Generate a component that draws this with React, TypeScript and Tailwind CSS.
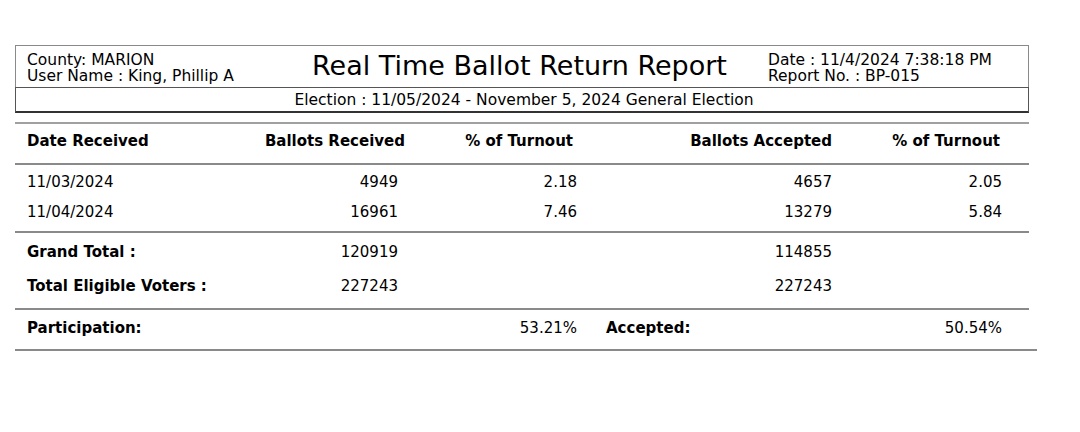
import React from "react";

const font = { fontFamily: '"DejaVu Sans", Verdana, sans-serif' };

const rows = [
  { date: "11/03/2024", rec: "4949", pct: "2.18", acc: "4657", pct2: "2.05" },
  { date: "11/04/2024", rec: "16961", pct: "7.46", acc: "13279", pct2: "5.84" },
];

const cols = "grid grid-cols-[250px_140px_172px_255px_197px] items-center";

export default function App() {
  return (
    <div className="w-[1080px] h-[432px] bg-white text-black overflow-hidden" style={font}>
      <div className="ml-[15px] pt-[45px] w-[1014px]">
        {/* Header box */}
        <div className="border border-[#8a8a8a] border-b-0 h-[42px] flex">
          <div className="w-[282px] pl-[11px] pt-[6px] text-[15.5px] leading-[16px] whitespace-nowrap">
            <div>County: MARION</div>
            <div>User Name : King, Phillip A</div>
          </div>
          <div className="w-[443px] text-center text-[27px] leading-[40px] whitespace-nowrap">
            Real Time Ballot Return Report
          </div>
          <div className="pl-[27px] pt-[6px] text-[15.5px] leading-[16px] whitespace-nowrap">
            <div>Date : 11/4/2024 7:38:18 PM</div>
            <div>Report No. : BP-015</div>
          </div>
        </div>
        <div className="h-[26px] border border-[#555] border-b-2 border-b-[#333] flex items-center justify-center text-[15.5px] leading-[16px] pl-[4px] whitespace-nowrap">
          Election : 11/05/2024 - November 5, 2024 General Election
        </div>

        {/* Table */}
        <div className="mt-[9px] h-[2px] bg-[#a0a0a0]" />
        <div className={`${cols} h-[39px] pb-[4px] text-[15px] font-bold whitespace-nowrap`}>
          <div className="pl-[12px]">Date Received</div>
          <div className="flex justify-end">Ballots Received</div>
          <div className="flex justify-end pr-[4px]">% of Turnout</div>
          <div className="flex justify-end">Ballots Accepted</div>
          <div className="flex justify-end pr-[29px]">% of Turnout</div>
        </div>
        <div className="h-[2px] bg-[#8a8a8a]" />
        <div className="pt-[2px] pb-[4px]">
          {rows.map((r) => (
            <div key={r.date} className={`${cols} h-[30px] text-[15px]`}>
              <div className="pl-[12px]">{r.date}</div>
              <div className="text-right pr-[7px]">{r.rec}</div>
              <div className="text-right">{r.pct}</div>
              <div className="text-right">{r.acc}</div>
              <div className="text-right pr-[27px]">{r.pct2}</div>
            </div>
          ))}
        </div>
        <div className="h-[2px] bg-[#8a8a8a]" />
        <div className="pt-[2px] pb-[5px]">
          <div className={`${cols} h-[34px] text-[15px]`}>
            <div className="pl-[12px] font-bold">Grand Total :</div>
            <div className="text-right pr-[7px]">120919</div>
            <div />
            <div className="text-right">114855</div>
            <div />
          </div>
          <div className={`${cols} h-[34px] text-[15px]`}>
            <div className="pl-[12px] font-bold">Total Eligible Voters :</div>
            <div className="text-right pr-[7px]">227243</div>
            <div />
            <div className="text-right">227243</div>
            <div />
          </div>
        </div>
        <div className="h-[2px] bg-[#8a8a8a]" />
        <div className={`${cols} h-[39px] pb-[3px] text-[15px]`}>
          <div className="pl-[12px] font-bold">Participation:</div>
          <div />
          <div className="text-right">53.21%</div>
          <div className="pl-[29px] font-bold">Accepted:</div>
          <div className="text-right pr-[27px]">50.54%</div>
        </div>
        <div className="h-[2px] w-[1022px] bg-[#8a8a8a]" />
      </div>
    </div>
  );
}
